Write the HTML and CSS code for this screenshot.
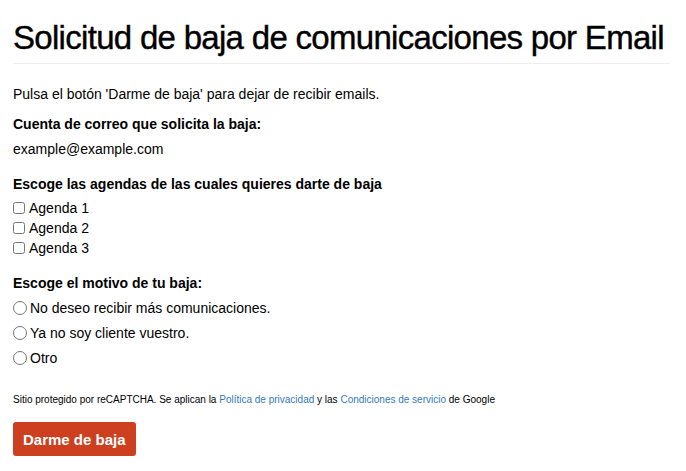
FILE: index.html
```html
<!DOCTYPE html>
<html lang="es">
<head>
  <meta charset="UTF-8" />
  <title>Solicitud de baja</title>
  <meta name="viewport" content="width=device-width, initial-scale=1" />
  <link rel="stylesheet" href="styles.css">
</head>
<body>
  <div class="container">
    <h1>Solicitud de baja de comunicaciones por Email</h1>
    <hr />

    <form>
      <p class="intro">Pulsa el botón 'Darme de baja' para dejar de recibir emails.</p>

      <label class="title">Cuenta de correo que solicita la baja:</label>
      <p class="email">example@example.com</p>

      <label class="title gap">Escoge las agendas de las cuales quieres darte de baja</label>
      <div class="check"><input type="checkbox" id="a1"><label for="a1">Agenda 1</label></div>
      <div class="check"><input type="checkbox" id="a2"><label for="a2">Agenda 2</label></div>
      <div class="check"><input type="checkbox" id="a3"><label for="a3">Agenda 3</label></div>

      <label class="title gap tight">Escoge el motivo de tu baja:</label>
      <div class="radio"><input type="radio" name="m" id="m1"><label for="m1">No deseo recibir más comunicaciones.</label></div>
      <div class="radio"><input type="radio" name="m" id="m2"><label for="m2">Ya no soy cliente vuestro.</label></div>
      <div class="radio"><input type="radio" name="m" id="m3"><label for="m3">Otro</label></div>

      <p class="legal">Sitio protegido por reCAPTCHA. Se aplican la <a href="#">Política de privacidad</a> y las <a href="#">Condiciones de servicio</a> de Google</p>

      <button type="submit">Darme de baja</button>
    </form>
  </div>
</body>
</html>
```

FILE: styles.css
```css
body { margin: 0; font-family: "Liberation Sans", Arial, sans-serif; font-size: 14px; line-height: 20px; color: #000; background: #fff; }
.container { padding: 0 16px 0 13px; }
h1 { font-size: 33px; font-weight: normal; line-height: 40px; margin: 0; padding-top: 18px; letter-spacing: -0.7px; white-space: nowrap; -webkit-text-stroke: 0.4px #000; }
hr { border: 0; border-top: 1px solid #eee; margin: 5px 0 0; }
p { margin: 0; }
.intro { margin-top: 20px; }
.title { display: block; font-weight: bold; margin-top: 10px; }
.title.gap { margin-top: 15px; margin-bottom: 4px; }
.title.tight { margin-bottom: 2px; }
.email { margin-top: 5px; }
.check { display: flex; align-items: center; height: 20px; }
.check input { margin: 0 4px 0 0; width: 12px; height: 12px; }
.radio { display: flex; align-items: center; height: 25px; }
.radio input { margin: 0 3px 0 0; width: 14px; height: 14px; }
.legal { font-size: 10px; line-height: 14px; margin-top: 23px; }
a { color: #337ab7; text-decoration: none; }
button { margin-top: 15px; padding: 0 10px; height: 34px; background: #cc4020; color: #fff; border: none; border-radius: 3px; font-family: inherit; font-size: 15px; font-weight: bold; cursor: pointer; }
button:hover { background: #b3361a; }
```
